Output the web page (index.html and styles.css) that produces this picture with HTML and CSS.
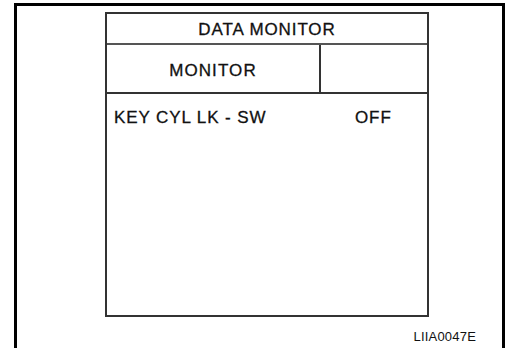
FILE: index.html
```html
<!DOCTYPE html>
<html lang="en">
<head>
    <meta charset="UTF-8">
    <meta name="viewport" content="width=device-width, initial-scale=1.0">
    <title>Data Monitor</title>
    <link rel="stylesheet" href="styles.css">
</head>
<body>
    <div class="frame">
        <div class="monitor">
            <div class="title">DATA MONITOR</div>
            <div class="cols">
                <div class="col-name">MONITOR</div>
                <div class="col-extra"></div>
            </div>
            <div class="rows">
                <div class="row">
                    <span class="label">KEY CYL LK - SW</span>
                    <span class="value">OFF</span>
                </div>
            </div>
        </div>
        <div class="code">LIIA0047E</div>
    </div>
</body>
</html>
```

FILE: styles.css
```css
* {
    box-sizing: border-box;
}
body {
    margin: 0;
    background-color: #fff;
    font-family: "Liberation Sans", Arial, sans-serif;
    color: #111;
}
.frame {
    margin: 3px 0 0 14px;
    width: 491px;
    height: 345px;
    border: 3px solid #000;
    border-bottom: none;
    display: flex;
    flex-direction: column;
}
.monitor {
    margin: 6px 0 0 88px;
    width: 324px;
    height: 305px;
    border: 2px solid #333;
    display: flex;
    flex-direction: column;
    font-size: 17px;
    letter-spacing: 0.9px;
    -webkit-text-stroke: 0.3px #111;
}
.title {
    height: 31px;
    border-bottom: 2px solid #555;
    display: flex;
    align-items: center;
    justify-content: center;
    padding-top: 3px;
}
.cols {
    height: 49px;
    border-bottom: 2px solid #333;
    display: flex;
}
.col-name {
    width: 214px;
    border-right: 2px solid #333;
    display: flex;
    align-items: center;
    justify-content: center;
    padding-top: 5px;
    letter-spacing: 1.1px;
}
.col-extra {
    flex: 1;
}
.rows {
    flex: 1;
    padding: 14px 0 0 7px;
}
.row {
    display: flex;
    line-height: 19px;
}
.label {
    width: 241px;
}
.code {
    align-self: flex-end;
    margin: 12px 26px 0 0;
    font-size: 13px;
    letter-spacing: 0.2px;
}
```
